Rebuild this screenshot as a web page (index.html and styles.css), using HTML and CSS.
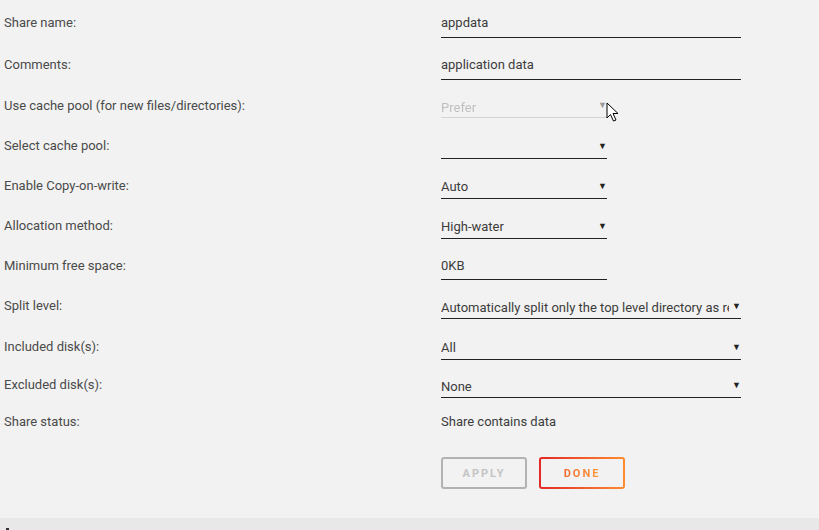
FILE: index.html
```html
<!DOCTYPE html>
<html lang="en">
<head>
  <meta charset="UTF-8" />
  <title>Share Settings</title>
  <link rel="stylesheet" href="styles.css">
</head>
<body>
  <form class="share-form">
    <div class="row r42">
      <label>Share name:</label>
      <input class="field long" type="text" value="appdata">
    </div>
    <div class="row r42">
      <label>Comments:</label>
      <input class="field long" type="text" value="application data">
    </div>
    <div class="row">
      <label>Use cache pool (for new files/directories):</label>
      <span class="select short disabled">
        <select disabled><option>Prefer</option></select>
      </span>
    </div>
    <div class="row">
      <label>Select cache pool:</label>
      <span class="select short">
        <select><option></option></select>
      </span>
    </div>
    <div class="row">
      <label>Enable Copy-on-write:</label>
      <span class="select short">
        <select><option>Auto</option></select>
      </span>
    </div>
    <div class="row">
      <label>Allocation method:</label>
      <span class="select short">
        <select><option>High-water</option></select>
      </span>
    </div>
    <div class="row">
      <label>Minimum free space:</label>
      <input class="field short num" type="text" value="0KB">
    </div>
    <div class="row r41">
      <label>Split level:</label>
      <span class="select long">
        <select><option>Automatically split only the top level directory as required</option></select>
      </span>
    </div>
    <div class="row">
      <label>Included disk(s):</label>
      <span class="select long">
        <select><option>All</option></select>
      </span>
    </div>
    <div class="row r37">
      <label>Excluded disk(s):</label>
      <span class="select long">
        <select><option>None</option></select>
      </span>
    </div>
    <div class="row r37">
      <label>Share status:</label>
      <span class="status">Share contains data</span>
    </div>
    <div class="buttons">
      <button type="button" class="btn apply" disabled>Apply</button>
      <button type="button" class="btn done"><span>Done</span></button>
    </div>
  </form>

  <div class="footer">
    <span class="footer-icon"></span>
  </div>

  <!-- mouse pointer from the screenshot -->
  <svg class="cursor" width="14" height="21" viewBox="0 0 14 21">
    <path d="M1 1 L1 16 L4.5 12.5 L7.5 19 L10 18 L7 11.5 L12 11.5 Z" fill="#fff" stroke="#000" stroke-width="1" stroke-linejoin="round"/>
  </svg>
</body>
</html>
```

FILE: styles.css
```css
body {
  margin: 0;
  padding: 0;
  background: #f2f2f2;
  font-family: Roboto, 'Noto Sans', sans-serif;
  font-size: 13px;
  color: #454545;
  height: 530px;
  overflow: hidden;
  position: relative;
}

.share-form {
  padding: 1px 0 0 4px;
  height: 518px;
  box-sizing: border-box;
}

.row {
  display: grid;
  grid-template-columns: 437px auto;
  align-items: center;
  height: 40px;
}
.row.r42 { height: 42px; }
.row.r41 { height: 41px; }
.row.r37 { height: 37px; }

.row label {
  color: #4a4a4a;
}

.field {
  font-family: inherit;
  font-size: 13px;
  color: #3c3c3c;
  background: transparent;
  border: none;
  border-bottom: 1px solid #222;
  padding: 0;
  margin: 0;
  height: 31px;
  box-sizing: border-box;
  padding-top: 1px;
  outline: none;
}

.long { width: 300px; }
.short { width: 166px; }

.field.num {
  height: 29px;
  padding-top: 2px;
}

.select {
  position: relative;
  display: block;
}

.select select {
  -webkit-appearance: none;
  appearance: none;
  font-family: inherit;
  font-size: 13px;
  color: #3c3c3c;
  background: transparent;
  border: none;
  border-bottom: 1px solid #222;
  border-radius: 0;
  width: 100%;
  height: 27px;
  padding: 4px 0 0 0;
  margin: 0;
  outline: none;
}

/* the little down arrow, drawn over the end of the text */
.select::after {
  content: "\25BC";
  position: absolute;
  right: 0;
  top: 2px;
  padding: 7px 0 4px 3px;
  font-size: 9px;
  line-height: 11px;
  color: #222;
  background: #f2f2f2;
  pointer-events: none;
}

.select.disabled select {
  color: #aaa;
  border-bottom-color: #c8c8c8;
  height: 26px;
  padding-top: 5px;
}
.select.disabled::after {
  color: #999;
  top: 1px;
}

.status {
  color: #3c3c3c;
}

.buttons {
  display: flex;
  gap: 12px;
  margin: 17px 0 0 437px;
}

.btn {
  width: 86px;
  height: 32px;
  border-radius: 3px;
  font-family: inherit;
  font-size: 11px;
  font-weight: bold;
  letter-spacing: 2px;
  text-transform: uppercase;
  cursor: pointer;
  padding: 0;
}

.btn.apply {
  background: transparent;
  border: 2px solid #b2b2b2;
  color: #c4c4c4;
}

.btn.done {
  border: 2px solid transparent;
  background: linear-gradient(#f2f2f2, #f2f2f2) padding-box,
              linear-gradient(90deg, #e22828, #ff8c2f) border-box;
}
.btn.done span {
  background: linear-gradient(90deg, #f0692c, #ff9a3c);
  -webkit-background-clip: text;
  background-clip: text;
  color: transparent;
}

.footer {
  position: absolute;
  left: 0;
  right: 0;
  top: 518px;
  bottom: 0;
  background: #e8e8e8;
}

.footer-icon {
  position: absolute;
  left: 6px;
  top: 10px;
  width: 3px;
  height: 2px;
  background: #333;
}

.cursor {
  position: absolute;
  left: 606px;
  top: 102px;
}
```
